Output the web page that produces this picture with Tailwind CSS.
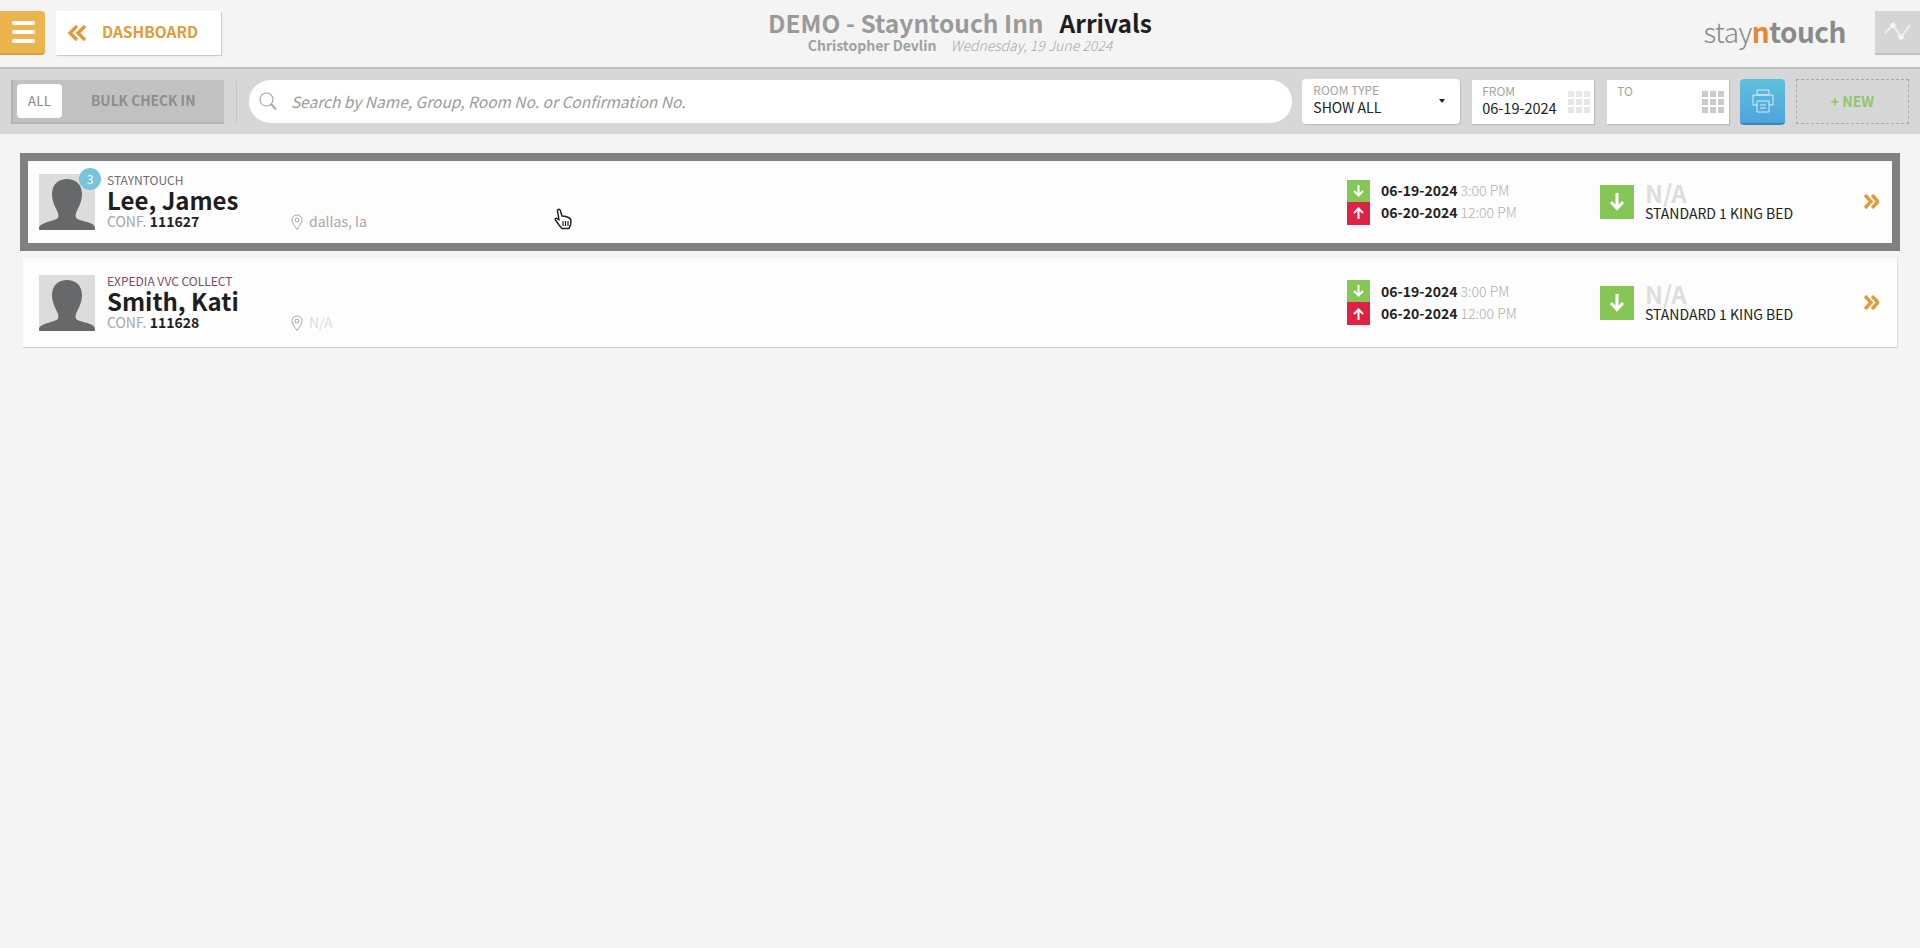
<!DOCTYPE html>
<html lang="en">
<head>
    <meta charset="UTF-8">
    <title>Arrivals - Stayntouch</title>
    <script src="https://cdn.jsdelivr.net/npm/@tailwindcss/browser@4"></script>
</head>
<body class="bg-[#f4f4f4] font-['Noto_Sans_CJK_SC','Noto_Sans',sans-serif] h-[948px] overflow-hidden relative">

    <!-- header -->
    <header class="h-[69px] flex items-center relative border-b-2 border-[#bdbdbd]">
        <button class="w-[45px] h-11 -mt-[2px] bg-[#ecb44f] border-b-2 border-[#d9a03c] rounded-r-sm flex flex-col items-center justify-center gap-[5px] pl-[1px]">
            <span class="block w-[23px] h-[4px] rounded-full bg-white"></span>
            <span class="block w-[23px] h-[4px] rounded-full bg-white"></span>
            <span class="block w-[23px] h-[4px] rounded-full bg-white"></span>
        </button>
        <a class="ml-[11px] w-[165px] h-11 -mt-[2px] bg-white shadow-[1px_1px_1px_#ccc] flex items-center pl-[11px] pb-[2px] text-[#e39a36] text-[15.500px] font-semibold">
            <svg class="w-[20px] h-[18px] mr-[15px] mt-[2px]" viewBox="0 0 20 18" fill="none" stroke="#e39a36" stroke-width="3.4"><path d="M10 2 3 9l7 7"/><path d="M18 2l-7 7 7 7"/></svg>
            DASHBOARD
        </a>
        <div class="absolute left-0 right-0 top-[7px] flex flex-col items-center">
            <div class="flex gap-[16px] text-[24.500px] leading-[31px] font-bold">
                <span class="text-[#9a9a9a]">DEMO - Stayntouch Inn</span>
                <span class="text-[#1e1e1e]">Arrivals</span>
            </div>
            <div class="flex gap-[14px] text-[14px] leading-[15px]">
                <span class="text-[#a0a0a0] font-bold">Christopher Devlin</span>
                <span class="text-[#a8a8a8] italic font-light">Wednesday, 19 June 2024</span>
            </div>
        </div>
        <div class="ml-auto text-[#888a8c] text-[28px] leading-[36px] -mt-[6px] tracking-[-0.5px] mr-[29px]">
            <span class="font-light">stay</span><span class="font-bold text-[#e9862f]">n</span><span class="font-bold">touch</span>
        </div>
        <div class="w-[45px] h-11 -mt-[2px] bg-[#d5d5d5] border-b-2 border-[#c2c2c2] flex items-center justify-center">
            <svg class="w-[30px] h-[20px]" viewBox="0 0 30 20" fill="none" stroke="#f4f4f4" stroke-width="1.500"><path d="M2 11 10 3l8 12 9-12"/><circle cx="10" cy="3.500" r="2" fill="#f4f4f4"/><circle cx="18" cy="15" r="2" fill="#f4f4f4"/></svg>
        </div>
    </header>

    <!-- filters -->
    <div class="h-[65px] bg-[#d7d7d7] flex items-center pl-[11px] pr-[11px]">
        <div class="w-[213px] h-[44px] bg-[#c1c1c1] border-l-2 border-b-2 border-[#b3b3b3] flex items-center pl-[4px] text-[13.750px] font-semibold">
            <span class="w-[45px] h-[34px] bg-white rounded-sm flex items-center justify-center text-[#8a8a8a] font-normal">ALL</span>
            <span class="ml-[29px] text-[#8d8d8d]">BULK CHECK IN</span>
        </div>
        <div class="w-px h-[42px] bg-[#c6c6c6] ml-3"></div>
        <div class="ml-3 w-[1044px] h-[43px] rounded-full bg-white flex items-center pl-[10px]">
            <svg class="w-[18px] h-[19px]" viewBox="0 0 18 19" fill="none" stroke="#a8a8a8" stroke-width="1.2"><circle cx="7.500" cy="7.500" r="6.500"/><path d="m12 12 5 5.500" stroke-width="2"/></svg>
            <span class="ml-[14px] pt-[1px] italic text-[15.500px] text-[#9b9b9b]">Search by Name, Group, Room No. or Confirmation No.</span>
        </div>
        <div class="ml-[10px] w-[158px] h-[45px] bg-white rounded-sm shadow-[1px_1px_1px_#bbb] relative pl-[11px] pt-[4px]">
            <div class="text-[12px] leading-[14px] text-[#a3a3a3]">ROOM TYPE</div>
            <div class="text-[14px] leading-[21px] text-[#222]">SHOW ALL</div>
            <span class="absolute right-[15px] top-[20px] border-x-[3px] border-t-[4px] border-x-transparent border-t-[#222]"></span>
        </div>
        <div class="ml-[12px] w-[122px] h-[44px] bg-white shadow-[1px_1px_1px_#bbb] flex items-center justify-between pl-[10px] pr-[4px]">
            <div class="-mt-[1px]">
                <div class="text-[12px] leading-[14px] text-[#a3a3a3]">FROM</div>
                <div class="text-[14.500px] leading-[20px] text-[#222]">06-19-2024</div>
            </div>
            <div class="grid grid-cols-3 gap-[2px]">
                <i class="w-[6px] h-[6px] bg-[#e7e7e7]"></i><i class="w-[6px] h-[6px] bg-[#e7e7e7]"></i><i class="w-[6px] h-[6px] bg-[#e7e7e7]"></i>
                <i class="w-[6px] h-[6px] bg-[#e7e7e7]"></i><i class="w-[6px] h-[6px] bg-[#e7e7e7]"></i><i class="w-[6px] h-[6px] bg-[#e7e7e7]"></i>
                <i class="w-[6px] h-[6px] bg-[#e7e7e7]"></i><i class="w-[6px] h-[6px] bg-[#e7e7e7]"></i><i class="w-[6px] h-[6px] bg-[#e7e7e7]"></i>
            </div>
        </div>
        <div class="ml-[13px] w-[122px] h-[44px] bg-white shadow-[1px_1px_1px_#bbb] flex items-center justify-between pl-[10px] pr-[5px]">
            <div class="self-start pt-[4px] text-[12px] leading-[14px] text-[#a3a3a3]">TO</div>
            <div class="grid grid-cols-3 gap-[2px]">
                <i class="w-[6px] h-[6px] bg-[#cbcbcb]"></i><i class="w-[6px] h-[6px] bg-[#cbcbcb]"></i><i class="w-[6px] h-[6px] bg-[#cbcbcb]"></i>
                <i class="w-[6px] h-[6px] bg-[#cbcbcb]"></i><i class="w-[6px] h-[6px] bg-[#cbcbcb]"></i><i class="w-[6px] h-[6px] bg-[#cbcbcb]"></i>
                <i class="w-[6px] h-[6px] bg-[#cbcbcb]"></i><i class="w-[6px] h-[6px] bg-[#cbcbcb]"></i><i class="w-[6px] h-[6px] bg-[#cbcbcb]"></i>
            </div>
        </div>
        <button class="ml-[11px] w-[45px] h-[46px] rounded-sm bg-gradient-to-b from-[#5fc0dd] to-[#4da4dc] border-b-2 border-[#3c86b8] flex items-center justify-center">
            <svg class="w-[22px] h-[24px]" viewBox="0 0 22 24" fill="none" stroke="#e4f4fa" stroke-width="0.9"><path d="M5 1h12v5H5z"/><path d="M5 16H1V6h20v10h-4"/><path d="M5 12h12v11H5z"/><path d="M8 16h6M8 19h6"/></svg>
        </button>
        <div class="ml-[11px] w-[113px] h-[45px] border border-dashed border-[#a9a9a9] flex items-center justify-center text-[14px] font-semibold text-[#93c56a]">+ NEW</div>
    </div>

    <!-- arrivals list -->
    <div class="pt-[19px]">
        <div class="mx-[20px] h-[98px] border-8 border-[#808082] bg-[#fdfdfd] flex items-center pl-[11px] pr-[13px]">
            <div class="w-[56px] h-[56px] bg-[#dcdcdc] relative shrink-0">
                <svg class="w-[56px] h-[56px]" viewBox="0 0 56 56" fill="#66686a"><path d="M13 20C13 10 20 5 28 5s15 5 15 15c0 8-4 14-6 19-1 4 0 6 4 7 6 2 15 3 15 8v1a1 1 0 0 1-1 1H1a1 1 0 0 1-1-1v-1c0-4 9-6 15-8 4-1 5-3 4-7-2-5-6-11-6-19z"/></svg>
                <span class="absolute -right-[6px] -top-[6px] w-[22px] h-[22px] rounded-full bg-[#79c3dc] text-white text-[12px] leading-[22px] text-center">3</span>
            </div>
            <div class="ml-3 w-[184px] shrink-0 -mt-[2px]">
                <div class="text-[12px] leading-[13px] text-[#6c6c78]">STAYNTOUCH</div>
                <div class="text-[24px] leading-[28px] font-bold text-[#1e1e1e]">Lee, James</div>
                <div class="text-[14px] leading-[15px] text-[#a8a8a8]">CONF. <b class="font-semibold text-[#222]">111627</b></div>
            </div>
            <div class="flex-1 self-end pb-[11px] flex items-center gap-[6px] text-[14px] text-[#a8a8a8]">
                <svg class="w-[12px] h-[16px]" viewBox="0 0 12 16" fill="none" stroke="#a8a8a8"><path d="M6 15.500C3 11 1 8.500 1 6a5 5 0 0 1 10 0c0 2.500-2 5-5 9.500z"/><circle cx="6" cy="6" r="2"/></svg>
                dallas, la
            </div>
            <div class="w-[253px] flex items-center shrink-0">
                <div class="w-[23px]">
                    <div class="h-[22px] bg-[#86c657] flex items-center justify-center"><svg class="w-[11px] h-[12px]" viewBox="0 0 11 12" fill="none" stroke="#fff" stroke-width="2"><path d="M5.500 0v10M1 6l4.500 4.500L10 6"/></svg></div>
                    <div class="h-[23px] bg-[#dd2244] flex items-center justify-center"><svg class="w-[11px] h-[12px]" viewBox="0 0 11 12" fill="none" stroke="#fff" stroke-width="2"><path d="M5.500 12V2M1 6l4.500-4.500L10 6"/></svg></div>
                </div>
                <div class="ml-[11px] text-[14px] leading-[22.500px] -mt-[2px]">
                    <div><b class="font-semibold text-[#222]">06-19-2024</b> <span class="text-[#b0b0b0] font-light">3:00 PM</span></div>
                    <div><b class="font-semibold text-[#222]">06-20-2024</b> <span class="text-[#b0b0b0] font-light">12:00 PM</span></div>
                </div>
            </div>
            <div class="w-[264px] flex items-center shrink-0">
                <div class="w-[34px] h-[34px] bg-[#86c657] flex items-center justify-center"><svg class="w-[16px] h-[18px]" viewBox="0 0 16 18" fill="none" stroke="#fff" stroke-width="3"><path d="M8 0v15M2 9l6 6.500L14 9"/></svg></div>
                <div class="ml-[11px] -mt-[2px]">
                    <div class="text-[24px] leading-[24px] font-bold text-[#dedede]">N/A</div>
                    <div class="text-[14px] leading-[16px] text-[#222]">STANDARD 1 KING BED</div>
                </div>
            </div>
            <svg class="w-[15px] h-[15px] shrink-0 -mt-[2px]" viewBox="0 0 15 15" fill="none" stroke="#e39a36" stroke-width="3.400"><path d="m1 1 6 6.500L1 14"/><path d="m8 1 6 6.500L8 14"/></svg>
        </div>

        <div class="mx-[23px] mt-[7px] h-[90px] bg-[#fdfdfd] border-b border-[#cfcfcf] shadow-[1px_0_1px_#ddd] flex items-center pl-4 pr-[18px]">
            <div class="w-[56px] h-[56px] bg-[#dcdcdc] relative shrink-0">
                <svg class="w-[56px] h-[56px]" viewBox="0 0 56 56" fill="#66686a"><path d="M13 20C13 10 20 5 28 5s15 5 15 15c0 8-4 14-6 19-1 4 0 6 4 7 6 2 15 3 15 8v1a1 1 0 0 1-1 1H1a1 1 0 0 1-1-1v-1c0-4 9-6 15-8 4-1 5-3 4-7-2-5-6-11-6-19z"/></svg>
            </div>
            <div class="ml-3 w-[184px] shrink-0 -mt-[2px]">
                <div class="text-[12px] leading-[13px] text-[#74506c]">EXPEDIA VVC COLLECT</div>
                <div class="text-[24px] leading-[28px] font-bold text-[#1e1e1e]">Smith, Kati</div>
                <div class="text-[14px] leading-[15px] text-[#a8a8a8]">CONF. <b class="font-semibold text-[#222]">111628</b></div>
            </div>
            <div class="flex-1 self-end pb-[14px] flex items-center gap-[6px] text-[14px] text-[#dedede]">
                <svg class="w-[12px] h-[16px]" viewBox="0 0 12 16" fill="none" stroke="#a8a8a8"><path d="M6 15.500C3 11 1 8.500 1 6a5 5 0 0 1 10 0c0 2.500-2 5-5 9.500z"/><circle cx="6" cy="6" r="2"/></svg>
                N/A
            </div>
            <div class="w-[253px] flex items-center shrink-0">
                <div class="w-[23px]">
                    <div class="h-[22px] bg-[#86c657] flex items-center justify-center"><svg class="w-[11px] h-[12px]" viewBox="0 0 11 12" fill="none" stroke="#fff" stroke-width="2"><path d="M5.500 0v10M1 6l4.500 4.500L10 6"/></svg></div>
                    <div class="h-[23px] bg-[#dd2244] flex items-center justify-center"><svg class="w-[11px] h-[12px]" viewBox="0 0 11 12" fill="none" stroke="#fff" stroke-width="2"><path d="M5.500 12V2M1 6l4.500-4.500L10 6"/></svg></div>
                </div>
                <div class="ml-[11px] text-[14px] leading-[22.500px] -mt-[1px]">
                    <div><b class="font-semibold text-[#222]">06-19-2024</b> <span class="text-[#b0b0b0] font-light">3:00 PM</span></div>
                    <div><b class="font-semibold text-[#222]">06-20-2024</b> <span class="text-[#b0b0b0] font-light">12:00 PM</span></div>
                </div>
            </div>
            <div class="w-[264px] flex items-center shrink-0">
                <div class="w-[34px] h-[34px] bg-[#86c657] flex items-center justify-center"><svg class="w-[16px] h-[18px]" viewBox="0 0 16 18" fill="none" stroke="#fff" stroke-width="3"><path d="M8 0v15M2 9l6 6.500L14 9"/></svg></div>
                <div class="ml-[11px] -mt-[1px]">
                    <div class="text-[24px] leading-[24px] font-bold text-[#dedede]">N/A</div>
                    <div class="text-[14px] leading-[16px] text-[#222]">STANDARD 1 KING BED</div>
                </div>
            </div>
            <svg class="w-[15px] h-[15px] shrink-0 -mt-[1px]" viewBox="0 0 15 15" fill="none" stroke="#e39a36" stroke-width="3.400"><path d="m1 1 6 6.500L1 14"/><path d="m8 1 6 6.500L8 14"/></svg>
        </div>
    </div>

    <!-- mouse pointer -->
    <svg class="absolute left-[554px] top-[208px] w-[18px] h-[22px]" viewBox="0 0 18 22" fill="#fff" stroke="#222" stroke-width="1.500" stroke-linejoin="round"><path d="M4 1.500c1-.8 2 0 2.300 1L8 8l4 .5 3.500 1.500c1 .6 1.500 1.500 1.500 3l-.5 4-1.500 3.500H8L5 17 1.500 12c-.8-1.200.5-2.200 1.500-1.500L5 12 3.500 3c-.1-.6 0-1 .5-1.500z"/><path d="M9 13v5M11.500 13v5M14 13v5" stroke-width="1.200"/></svg>
</body>
</html>
